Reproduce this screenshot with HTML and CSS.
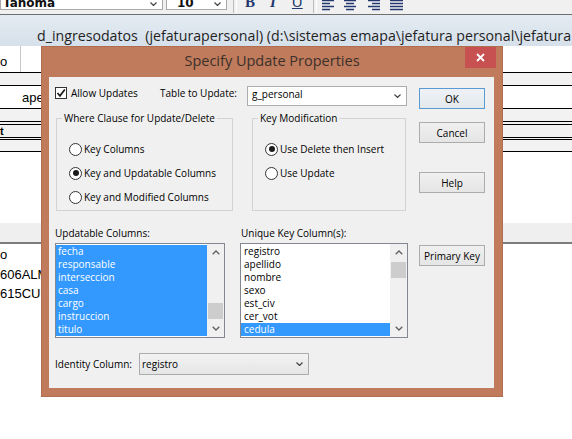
FILE: index.html
```html
<!DOCTYPE html>
<html>
<head>
<meta charset="utf-8">
<link rel="stylesheet" href="styles.css">
</head>
<body>
<div class="toolbar">
  <div class="tcombo tc-font"><span class="tc-text">Tahoma</span><svg class="chev tchev" width="7" height="4" viewBox="0 0 7 4"><path d="M0.5 0.5 L3.5 3.5 L6.5 0.5"/></svg></div>
  <div class="tcombo tc-size"><span class="tc-text">10</span><svg class="chev tchev" width="7" height="4" viewBox="0 0 7 4"><path d="M0.5 0.5 L3.5 3.5 L6.5 0.5"/></svg></div>
  <div class="tsep tsep-a"></div>
  <span class="tfmt tf-b">B</span><span class="tfmt tf-i">I</span><span class="tfmt tf-u">U</span>
  <div class="tsep tsep-b"></div>
  <svg class="aligns" width="82" height="12" viewBox="0 0 82 12">
    <g stroke="#23386e" stroke-width="1.4">
      <path d="M0 1.5h12M0 4.5h8M0 7.5h12M0 10.5h8"/>
      <path d="M22 1.5h12M24 4.5h8M22 7.5h12M24 10.5h8"/>
      <path d="M46 1.5h12M50 4.5h8M46 7.5h12M50 10.5h8"/>
      <path d="M68 1.5h13M68 4.5h13M68 7.5h13M68 10.5h13"/>
    </g>
  </svg>
</div>
<div class="doc-title">d_ingresodatos  (jefaturapersonal) (d:\sistemas emapa\jefatura personal\jefatura</div>
<div class="doc">
  <div class="band b1"><span class="cell-o">o</span></div>
  <div class="band b2"></div>
  <div class="band b3"><span class="ape">ape</span></div>
  <div class="band b4"></div>
  <div class="band b5"></div>
  <div class="band b6"><span class="tmark">t</span></div>
  <div class="band b7"></div>
  <div class="band b8"></div>
  <div class="band b9"></div>
  <div class="band b10"></div>
  <div class="rows">
    <div class="drow">o</div>
    <div class="drow">606ALM</div>
    <div class="drow">615CUM</div>
  </div>
</div>

<div class="dialog">
  <div class="dlg-title">
    <span class="dlg-title-text">Specify Update Properties</span>
    <div class="close"><svg width="9" height="9" viewBox="0 0 9 9"><path d="M1 1L8 8M8 1L1 8" stroke="#fff" stroke-width="1.8"/></svg></div>
  </div>
  <div class="client">
    <div class="main">
      <div class="row1">
        <div class="check">
          <span class="cbox"><svg width="10" height="10" viewBox="0 0 10 10"><path d="M1.5 5 L4 7.8 L8.8 1.6" fill="none" stroke="#1a1a1a" stroke-width="1.7"/></svg></span>
          <span class="txt">Allow Updates</span>
        </div>
        <span class="tlabel">Table to Update:</span>
        <div class="combo-w"><span class="txt">g_personal</span><svg class="chev" width="7" height="4" viewBox="0 0 7 4"><path d="M0.5 0.5 L3.5 3.5 L6.5 0.5"/></svg></div>
      </div>
      <div class="groups">
        <fieldset class="grp grp1">
          <legend>Where Clause for Update/Delete</legend>
          <div class="radio"><span class="rb"></span><span class="txt">Key Columns</span></div>
          <div class="radio"><span class="rb on"></span><span class="txt">Key and Updatable Columns</span></div>
          <div class="radio"><span class="rb"></span><span class="txt">Key and Modified Columns</span></div>
        </fieldset>
        <fieldset class="grp grp2">
          <legend>Key Modification</legend>
          <div class="radio"><span class="rb on"></span><span class="txt">Use Delete then Insert</span></div>
          <div class="radio"><span class="rb"></span><span class="txt">Use Update</span></div>
        </fieldset>
      </div>
      <div class="lists">
        <div class="lcol lcol1">
          <div class="llabel">Updatable Columns:</div>
          <div class="listbox">
            <div class="items">
              <div class="item sel">fecha</div>
              <div class="item sel">responsable</div>
              <div class="item sel">interseccion</div>
              <div class="item sel">casa</div>
              <div class="item sel">cargo</div>
              <div class="item sel">instruccion</div>
              <div class="item sel">titulo</div>
            </div>
            <div class="sb">
              <div class="sb-btn"><svg width="8" height="5" viewBox="0 0 8 5"><path d="M0.7 4.3 L4 1 L7.3 4.3" fill="none" stroke="#606060" stroke-width="1.3"/></svg></div>
              <div class="sb-track"><div class="thumb thumb1"></div></div>
              <div class="sb-btn"><svg width="8" height="5" viewBox="0 0 8 5"><path d="M0.7 0.7 L4 4 L7.3 0.7" fill="none" stroke="#606060" stroke-width="1.3"/></svg></div>
            </div>
          </div>
        </div>
        <div class="lcol lcol2">
          <div class="llabel">Unique Key Column(s):</div>
          <div class="listbox">
            <div class="items items2">
              <div class="item">registro</div>
              <div class="item">apellido</div>
              <div class="item">nombre</div>
              <div class="item">sexo</div>
              <div class="item">est_civ</div>
              <div class="item">cer_vot</div>
              <div class="item sel">cedula</div>
            </div>
            <div class="sb">
              <div class="sb-btn"><svg width="8" height="5" viewBox="0 0 8 5"><path d="M0.7 4.3 L4 1 L7.3 4.3" fill="none" stroke="#606060" stroke-width="1.3"/></svg></div>
              <div class="sb-track"><div class="thumb thumb2"></div></div>
              <div class="sb-btn"><svg width="8" height="5" viewBox="0 0 8 5"><path d="M0.7 0.7 L4 4 L7.3 0.7" fill="none" stroke="#606060" stroke-width="1.3"/></svg></div>
            </div>
          </div>
        </div>
      </div>
      <div class="ident">
        <span class="ilabel">Identity Column:</span>
        <div class="combo-g"><span class="txt">registro</span><svg class="chev" width="7" height="4" viewBox="0 0 7 4"><path d="M0.5 0.5 L3.5 3.5 L6.5 0.5"/></svg></div>
      </div>
    </div>
    <div class="btns">
      <div class="btn btn-ok">OK</div>
      <div class="btn btn-cancel">Cancel</div>
      <div class="btn btn-help">Help</div>
      <div class="btn btn-pk">Primary Key</div>
    </div>
  </div>
</div>
</body>
</html>
```
FILE: styles.css
```css
* { box-sizing: border-box; }
html, body { margin: 0; padding: 0; }
body {
  width: 572px; height: 439px; overflow: hidden; position: relative;
  background: #fff; color: #000;
  font-family: "Open Sans", "Noto Sans", sans-serif;
}

/* toolbar */
.toolbar {
  height: 15px; background: #f0f0f0; border-bottom: 1px solid #6e6e6e;
  display: flex; align-items: flex-start; overflow: hidden;
}
.tcombo {
  height: 10px; background: #fff; border: 1px solid #a9a9a9; border-top: 0;
  display: flex; justify-content: space-between; align-items: flex-start; overflow: hidden;
}
.tc-font { width: 163px; padding: 0 5px 0 2px; }
.tc-size { width: 61px; margin-left: 3px; padding: 0 5px 0 10px; }
.tc-text {
  font-family: "DejaVu Sans", sans-serif; font-weight: bold; font-size: 12px;
  line-height: 12px; margin-top: -3px; color: #111;
}
.chev path { fill: none; stroke: #444; stroke-width: 1.2; }
.tchev { margin-top: 2px; }
.tsep { width: 4px; height: 13px; border-left: 1px solid #bdbdbd; border-right: 1px solid #fff; }
.tsep-a { margin-left: 6px; }
.tfmt {
  font-family: "Liberation Serif", serif; font-size: 15px; line-height: 12px;
  margin-top: -4px; color: #23386e; font-weight: bold;
}
.tf-b { margin-left: 8px; }
.tf-i { margin-left: 15px; font-style: italic; }
.tf-u { margin-left: 16px; text-decoration: underline; font-family: "Liberation Sans", sans-serif; font-weight: normal; }
.tsep-b { margin-left: 10px; }
.aligns { margin-left: 5px; margin-top: -1px; }

/* document window title */
.doc-title {
  height: 31px; padding: 11px 0 0 37px; line-height: 20px; font-size: 14.2px;
  white-space: pre; overflow: hidden; color: #1f1f1f;
  background: linear-gradient(#e4ebf2, #d6e0ea);
}

/* document bands behind */
.doc { font-family: "Liberation Sans", sans-serif; font-size: 13px; }
.band { border-bottom: 1px solid #000; display: flex; align-items: center; }
.b1 { height: 27px; background: #fff; align-items: stretch; }
.cell-o { width: 21px; border-right: 1px solid #c8c8c8; padding-top: 9px; line-height: 14px; }
.b2 { height: 13px; background: #f2f2f2; }
.b3 { height: 23px; background: #fff; padding-left: 22px; }
.b4 { height: 13px; background: #f2f2f2; }
.b5 { height: 3px; background: #f2f2f2; }
.b6 { height: 13px; background: #f2f2f2; }
.tmark { font-weight: bold; font-size: 11px; line-height: 11px; }
.b7 { height: 2px; background: #f2f2f2; }
.b8 { height: 12px; background: #f2f2f2; }
.b9 { height: 71px; background: #fff; border-bottom: 0; }
.b10 { height: 21px; background: #efefef; border-bottom: 2px solid #7c7c7c; }
.rows { padding-top: 1px; }
.drow { line-height: 19.5px; }

/* dialog */
.dialog {
  position: absolute; left: 41px; top: 46px; width: 462px; height: 351px;
  background: #bf7b5b; display: flex; flex-direction: column;
  box-shadow: inset 0 0 0 1px #b06d4f;
}
.dlg-title { height: 31px; display: grid; grid-template-columns: 1fr auto 1fr; align-items: start; }
.dlg-title-text { grid-column: 2; font-size: 14.5px; line-height: 20px; margin-top: 5px; color: #3b302b; white-space: nowrap; }
.close {
  grid-column: 3; justify-self: end; width: 31px; height: 21px; margin: 1px 7px 0 0;
  background: #c75050; display: flex; align-items: center; justify-content: center;
}
.client {
  flex: 1; margin: 0 9px 9px 8px; background: #f0f0f0;
  display: flex; padding: 9px 0 0 6px; font-size: 10px;
}
.txt { line-height: 14px; }
.main { width: 353px; }

.row1 { display: flex; height: 20px; align-items: flex-start; }
.check { width: 105px; display: flex; align-items: flex-start; }
.cbox {
  width: 12px; height: 12px; border: 1px solid #333; background: #fff; margin: 1px 4px 0 0;
  display: flex; align-items: center; justify-content: center;
}
.tlabel { width: 87px; line-height: 14px; }
.combo-w {
  width: 160px; height: 20px; border: 1px solid #abadb3; background: #fff;
  display: flex; justify-content: space-between; align-items: flex-start; padding: 0 5px 0 4px;
}
.combo-w .chev { margin-top: 7px; }

.groups { display: flex; margin-top: 5px; }
.grp { margin: 0; border: 1px solid #d3d3d3; padding: 12px 0 1px 0; min-inline-size: 0; }
.grp legend { padding: 0 2px; margin-left: 5px; line-height: 14px; font-size: 10px; }
.grp1 { width: 177px; margin-left: 1px; }
.grp2 { width: 154px; margin-left: 19px; }
.radio { height: 24px; display: flex; align-items: center; margin-left: 12px; }
.rb {
  width: 13px; height: 13px; border: 1px solid #333; border-radius: 50%; background: #fff;
  margin-right: 2px; display: flex; align-items: center; justify-content: center; flex: none;
}
.rb.on::after { content: ""; width: 6px; height: 6px; border-radius: 50%; background: #1a1a1a; }

.lists { display: flex; margin-top: 15px; }
.lcol1 { width: 170px; }
.lcol2 { width: 168px; margin-left: 15px; }
.llabel { line-height: 14px; }
.lcol2 .llabel { margin-left: 1px; }
.listbox { height: 95px; margin-top: 3px; border: 1px solid #828790; background: #fff; display: flex; }
.items { flex: 1; padding-top: 1px; }
.item { height: 13px; line-height: 13px; padding-left: 2px; white-space: nowrap; }
.items2 .item { padding-left: 3px; }
.item.sel { background: #3399ff; color: #fff; }
.sb { width: 17px; display: flex; flex-direction: column; background: #f0f0f0; }
.sb-btn { height: 17px; display: flex; align-items: center; justify-content: center; }
.sb-track { flex: 1; }
.thumb { width: 15px; height: 16px; margin: 0 auto; background: #cdcdcd; }
.thumb1 { margin-top: 42px; }
.thumb2 { margin-top: 1px; }

.ident { display: flex; align-items: center; margin-top: 15px; }
.ilabel { width: 84px; line-height: 14px; }
.combo-g {
  width: 170px; height: 22px; border: 1px solid #acacac;
  background: linear-gradient(#f3f3f3, #e5e5e5);
  display: flex; align-items: center; justify-content: space-between; padding: 0 5px 0 2px;
}

.btns { width: 66px; margin-left: 11px; padding-top: 2px; display: flex; flex-direction: column; }
.btn {
  height: 21px; border: 1px solid #acacac; background: linear-gradient(#f0f0f0, #e5e5e5);
  display: flex; align-items: center; justify-content: center; line-height: 14px; white-space: nowrap;
}
.btn-ok { border-color: #5b9bd5; background: linear-gradient(#eef2f6, #e4e9ee); }
.btn-cancel { margin-top: 13px; }
.btn-help { margin-top: 29px; }
.btn-pk { margin-top: 52px; }
```
